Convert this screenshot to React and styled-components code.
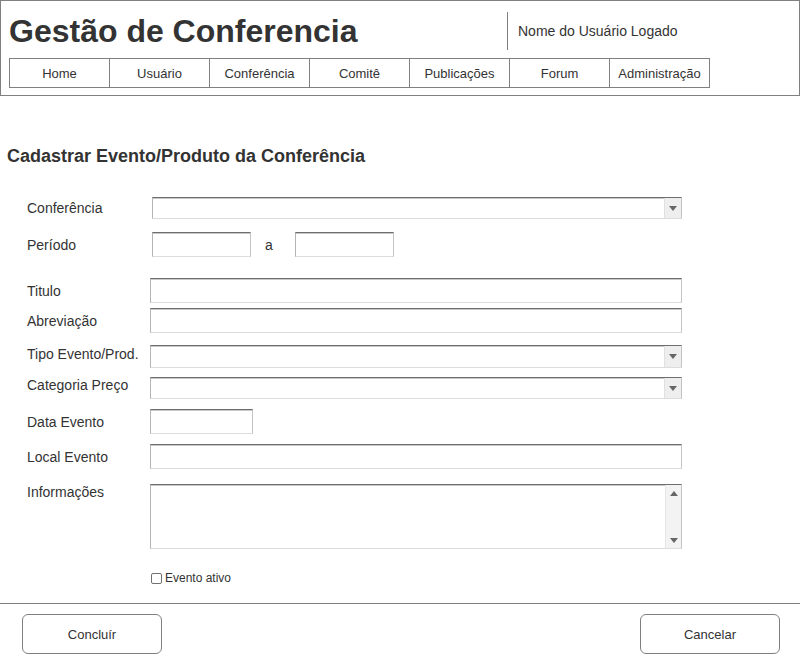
import React from 'react'
import styled, { createGlobalStyle, css } from 'styled-components'

const GlobalStyle = createGlobalStyle`
	html, body {
		margin: 0;
		padding: 0;
		background: #fff;
	}
	body {
		font-family: 'Liberation Sans', Arial, sans-serif;
		color: #333;
	}
`

const Page = styled.div`
	width: 800px;
	height: 654px;
	display: flex;
	flex-direction: column;
	overflow: hidden;
`
const Header = styled.header`
	flex-shrink: 0;
	height: 96px;
	box-sizing: border-box;
	border: 1px solid #808080;
	display: flex;
	flex-direction: column;
	padding: 0 0 0 8px;
`
const TopBar = styled.div`
	height: 57px;
	display: flex;
	align-items: center;
`
const AppTitle = styled.h1`
	margin: 0;
	font-size: 32px;
	font-weight: 700;
	color: #333;
	width: 498px;
	line-height: 1;
	padding-top: 2px;
`
const UserBox = styled.div`
	height: 38px;
	margin-top: 3px;
	border-left: 1px solid #808080;
	padding-left: 10px;
	display: flex;
	align-items: center;
	font-size: 14px;
	color: #333;
`
const Nav = styled.nav`
	display: flex;
	height: 30px;
	box-sizing: border-box;
	border: 1px solid #808080;
	border-left: none;
	align-self: flex-start;
`
const NavItem = styled.div`
	width: 100px;
	flex-shrink: 0;
	box-sizing: border-box;
	border-left: 1px solid #808080;
	display: flex;
	align-items: center;
	justify-content: center;
	font-size: 13px;
	color: #333;
`
const Main = styled.main`
	flex: 1;
	display: flex;
	flex-direction: column;
`
const Heading = styled.h2`
	margin: 49px 0 0 7px;
	font-size: 18px;
	font-weight: 700;
	line-height: 22px;
	color: #333;
`
const Form = styled.form`
	display: flex;
	flex-direction: column;
	padding-left: 27px;
`
const Row = styled.div`
	display: flex;
	align-items: ${p => (p.$top ? 'flex-start' : 'center')};
	margin-top: ${p => p.$mt}px;
`
const Label = styled.label`
	width: 123px;
	flex-shrink: 0;
	font-size: 14px;
	line-height: 16px;
	color: #333;
	position: relative;
	top: ${p => p.$shift || 0}px;
`
const fieldBorder = css`
	box-sizing: border-box;
	background: #fff;
	border-top: 1px solid #6e6e6e;
	border-left: 1px solid #b4b4b4;
	border-right: 1px solid #c4c4c4;
	border-bottom: 1px solid #dcdcdc;
	box-shadow: inset 0 1px 0 #c8c8c8;
`
const Input = styled.div`
	${fieldBorder};
	width: ${p => p.$w || 532}px;
	height: ${p => p.$h || 25}px;
	margin-left: ${p => p.$indent || 0}px;
`
const Select = styled.div`
	${fieldBorder};
	width: ${p => p.$w || 532}px;
	height: ${p => p.$h || 22}px;
	margin-left: ${p => p.$indent || 0}px;
	display: flex;
	justify-content: flex-end;
`
const ArrowBox = styled.div`
	width: 16px;
	background: #eeeeee;
	border-left: 1px solid #e0e0e0;
	display: flex;
	align-items: center;
	justify-content: center;
`
const Triangle = styled.span`
	width: 0;
	height: 0;
	border-left: 4px solid transparent;
	border-right: 4px solid transparent;
	${p =>
		p.$up
			? css`
					border-bottom: 5px solid #666;
			  `
			: css`
					border-top: 5px solid #666;
			  `}
`
const TextArea = styled.div`
	${fieldBorder};
	width: 532px;
	height: 65px;
	display: flex;
	justify-content: flex-end;
`
const ScrollBar = styled.div`
	width: 16px;
	background: #f3f3f3;
	border-left: 1px solid #e6e6e6;
	display: flex;
	flex-direction: column;
	justify-content: space-between;
	align-items: center;
	padding: 6px 0 5px;
	box-sizing: border-box;
`
const Sep = styled.span`
	font-size: 14px;
	color: #333;
	margin: 0 14px 0 14px;
	width: 16px;
`
const CheckRow = styled.label`
	display: flex;
	align-items: center;
	margin: 22px 0 0 124px;
	font-size: 12px;
	color: #333;
	gap: 3px;
`
const CheckBox = styled.span`
	width: 11px;
	height: 11px;
	box-sizing: border-box;
	border: 1px solid #707070;
	border-radius: 2px;
	background: #fff;
`
const Footer = styled.footer`
	flex-shrink: 0;
	margin-top: 18px;
	border-top: 1px solid #808080;
	padding: 10px 20px 0 22px;
	display: flex;
	justify-content: space-between;
`
const Button = styled.button`
	width: 140px;
	height: 40px;
	box-sizing: border-box;
	border: 1px solid #808080;
	border-radius: 6px;
	background: #fff;
	font-family: 'Liberation Sans', Arial, sans-serif;
	font-size: 13px;
	color: #333;
	cursor: pointer;
`

const menu = ['Home', 'Usuário', 'Conferência', 'Comitê', 'Publicações', 'Forum', 'Administração']

const App = () => {
	return (
		<Page>
			<GlobalStyle />
			<Header>
				<TopBar>
					<AppTitle>Gestão de Conferencia</AppTitle>
					<UserBox>Nome do Usuário Logado</UserBox>
				</TopBar>
				<Nav>
					{menu.map(m => (
						<NavItem key={m}>{m}</NavItem>
					))}
				</Nav>
			</Header>
			<Main>
				<Heading>Cadastrar Evento/Produto da Conferência</Heading>
				<Form>
					<Row $mt={30}>
						<Label>Conferência</Label>
						<Select $w={530} $indent={2}>
							<ArrowBox>
								<Triangle />
							</ArrowBox>
						</Select>
					</Row>
					<Row $mt={13}>
						<Label>Período</Label>
						<Input $w={99} $indent={2} />
						<Sep>a</Sep>
						<Input $w={99} />
					</Row>
					<Row $mt={21}>
						<Label>Titulo</Label>
						<Input />
					</Row>
					<Row $mt={5}>
						<Label>Abreviação</Label>
						<Input />
					</Row>
					<Row $mt={12}>
						<Label $shift={-3}>Tipo Evento/Prod.</Label>
						<Select $h={23}>
							<ArrowBox>
								<Triangle />
							</ArrowBox>
						</Select>
					</Row>
					<Row $mt={9}>
						<Label $shift={-3}>Categoria Preço</Label>
						<Select>
							<ArrowBox>
								<Triangle />
							</ArrowBox>
						</Select>
					</Row>
					<Row $mt={10}>
						<Label>Data Evento</Label>
						<Input $w={103} />
					</Row>
					<Row $mt={10}>
						<Label>Local Evento</Label>
						<Input />
					</Row>
					<Row $mt={15} $top>
						<Label>Informações</Label>
						<TextArea>
							<ScrollBar>
								<Triangle $up />
								<Triangle />
							</ScrollBar>
						</TextArea>
					</Row>
					<CheckRow>
						<CheckBox />
						Evento ativo
					</CheckRow>
				</Form>
				<Footer>
					<Button type='button'>Concluír</Button>
					<Button type='button'>Cancelar</Button>
				</Footer>
			</Main>
		</Page>
	)
}

export default App
